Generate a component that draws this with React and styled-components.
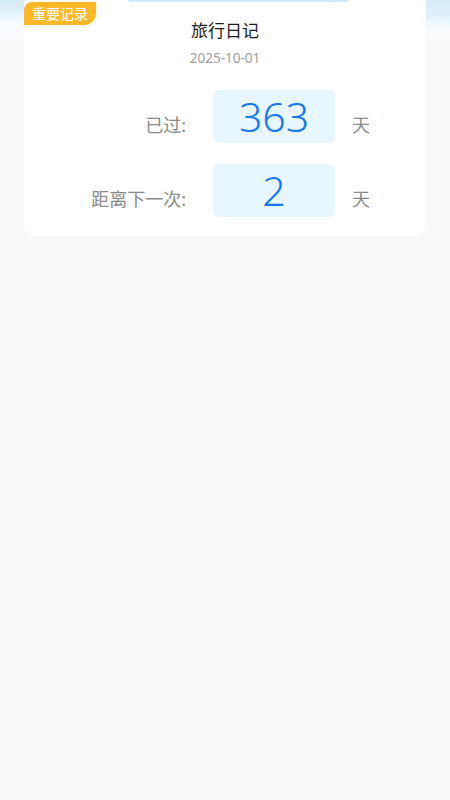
import React from 'react';
import styled, { createGlobalStyle } from 'styled-components';

const GlobalStyle = createGlobalStyle`
  html, body {
    margin: 0;
    padding: 0;
    background: #f9f9f9;
  }
  body {
    font-family: "Noto Sans", "Noto Sans CJK SC", sans-serif;
  }
`;

const Page = styled.div`
  min-height: 800px;
  background:
    radial-gradient(ellipse 60px 18px at 12px 26px, rgba(255,255,255,0.75), rgba(255,255,255,0) 100%),
    radial-gradient(ellipse 50px 16px at 440px 30px, rgba(255,255,255,0.7), rgba(255,255,255,0) 100%),
    linear-gradient(180deg, #d6ecf9 0px, #e2f2fc 20px, #f1f8fc 32px, #f9f9f9 36px, #f9f9f9 100%);
  padding: 0 24px;
`;

const Card = styled.div`
  position: relative;
  background: #ffffff;
  border-radius: 0 0 12px 12px;
  padding: 20px 0 19px;

  &::before {
    content: '';
    position: absolute;
    top: 0;
    left: 104px;
    width: 220px;
    height: 2px;
    background: #cdebfa;
    border-radius: 0 0 2px 2px;
  }
`;

const Badge = styled.span`
  position: absolute;
  top: 2px;
  left: 0;
  width: 72px;
  height: 23px;
  line-height: 23px;
  text-align: center;
  background: #fdb827;
  color: #ffffff;
  font-size: 14px;
  border-radius: 8px 0 12px 0;
`;

const Title = styled.div`
  text-align: center;
  font-size: 17px;
  color: #1c1c1c;
  line-height: 22px;
`;

const DateText = styled.div`
  text-align: center;
  font-size: 13.5px;
  color: #a0a0a0;
  line-height: 18px;
  margin-top: 7px;
`;

const Rows = styled.div`
  display: flex;
  flex-direction: column;
  gap: 21px;
  margin-top: 23px;
`;

const Row = styled.div`
  display: grid;
  grid-template-columns: 189px 122px 1fr;
  align-items: baseline;
`;

const Label = styled.span`
  text-align: right;
  font-size: 18px;
  color: #8a8a8a;
  padding-right: 27px;
`;

const NumberBox = styled.div`
  height: 53px;
  background: #e8f6ff;
  border-radius: 6px;
  display: flex;
  align-items: center;
  justify-content: center;
  font-size: 41px;
  font-weight: 300;
  line-height: 53px;
  color: #1677f2;
`;

const Unit = styled.span`
  font-size: 18px;
  color: #8a8a8a;
  padding-left: 17px;
`;

const rows = [
  { label: '已过:', value: 363 },
  { label: '距离下一次:', value: 2 },
];

export default function App() {
  return (
    <>
      <GlobalStyle />
      <Page>
        <Card>
          <Badge>重要记录</Badge>
          <Title>旅行日记</Title>
          <DateText>2025-10-01</DateText>
          <Rows>
            {rows.map((r) => (
              <Row key={r.label}>
                <Label>{r.label}</Label>
                <NumberBox>{r.value}</NumberBox>
                <Unit>天</Unit>
              </Row>
            ))}
          </Rows>
        </Card>
      </Page>
    </>
  );
}
